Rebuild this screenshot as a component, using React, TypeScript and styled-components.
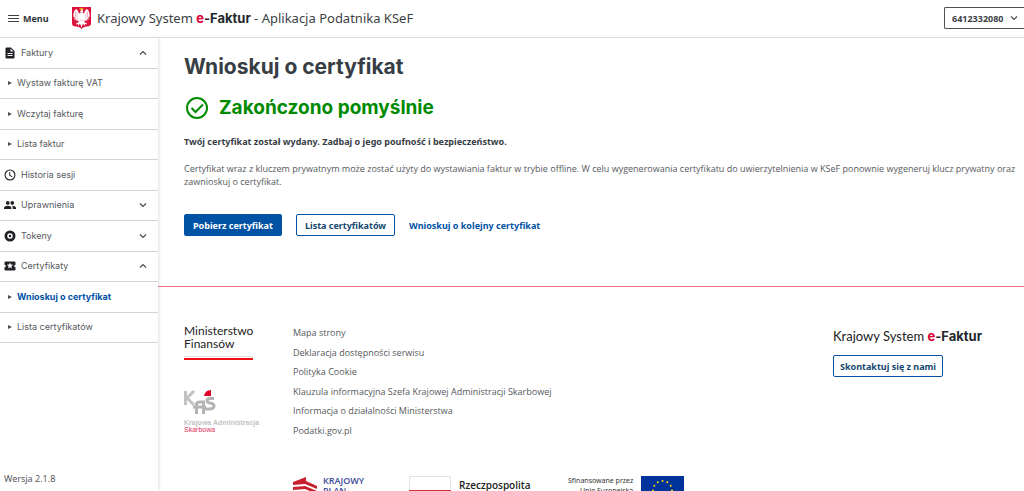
import React from "react";
import styled, { createGlobalStyle, css } from "styled-components";

const sans = `"Open Sans", "Noto Sans", sans-serif`;
const strong = `"Noto Sans", "Open Sans", sans-serif`;
const display = `Inter, "Noto Sans", sans-serif`;

const GlobalStyle = createGlobalStyle`
  *, *::before, *::after { box-sizing: border-box; }
  body { margin: 0; background: #fff; color: #56595d; font: 9px/13px ${sans}; }
  h1, h2, p, ul { margin: 0; padding: 0; }
  ul { list-style: none; }
  a { color: inherit; text-decoration: none; }
  button, select { font-family: ${strong}; cursor: pointer; }
  svg { display: block; flex: none; }
`;

const Shell = styled.div`
  display: flex;
  flex-direction: column;
  height: 100vh;
  overflow: hidden;
`;

const Header = styled.header`
  display: flex;
  align-items: center;
  flex: none;
  height: 38px;
  padding: 0 0 1px 8px;
  border-bottom: 1px solid #dcdcdc;
`;

const MenuButton = styled.button`
  display: flex;
  align-items: center;
  gap: 4px;
  width: 64px;
  padding: 0;
  border: 0;
  background: none;
  color: #2f353a;
  font-size: 9px;
  font-weight: 700;
`;

const Brand = styled.a`
  display: flex;
  align-items: center;
  gap: 6px;
  color: #3c4146;
  font: 400 13px/18px ${strong};
  white-space: nowrap;
`;

const BrandName = styled.strong`
  font-family: ${display};
  font-weight: 700;
  color: #24282c;
  em { font-style: normal; color: #dc0032; }
`;

const Account = styled.div`
  position: relative;
  margin-left: auto;
  svg { position: absolute; right: 5px; top: 6px; pointer-events: none; }
`;

const AccountSelect = styled.select`
  appearance: none;
  display: block;
  width: 80px;
  height: 22px;
  padding: 0 0 0 7px;
  border: 1px solid #4d5258;
  border-width: 1px 0 1px 1px;
  border-radius: 2px 0 0 2px;
  background: #fff;
  color: #3c4146;
  font-size: 9px;
  font-weight: 700;
`;

const Body = styled.div`
  display: flex;
  flex: 1;
  min-height: 0;
`;

const Sidebar = styled.aside`
  display: flex;
  flex-direction: column;
  justify-content: space-between;
  flex: none;
  width: 158px;
  box-shadow: 1px 0 3px #dedede;
`;

const NavList = styled.ul`
  display: grid;
  grid-auto-rows: 1fr;
  height: 305px;
`;

const NavItem = styled.li`
  display: flex;
  border-bottom: 1px solid #d4d4d4;
`;

const navStyles = css`
  display: flex;
  align-items: center;
  flex: 1;
  border: 0;
  background: none;
  color: #56595d;
  font-family: ${display};
  font-size: 9px;
  line-height: 12px;
`;

const NavGroup = styled.button`
  ${navStyles}
  gap: 5px;
  padding: 0 10px 0 4px;
  svg:nth-of-type(2) { margin-left: auto; }
`;

const NavLink = styled.a<{ $active?: boolean }>`
  ${navStyles}
  gap: 5px;
  padding-left: 8px;
  ${(p) => p.$active && css`color: #0052a5; font-weight: 700;`}
`;

const Version = styled.p`
  padding: 0 4px 6px;
  font-family: ${strong};
`;

const Content = styled.div`
  flex: 1;
  min-width: 0;
  overflow-y: auto;
  scrollbar-width: none;
`;

const Main = styled.main`
  padding: 15px 4px 50px 26px;
  border-bottom: 1px solid #f0708c;
`;

const Title = styled.h1`
  color: #363d44;
  font: 700 21px/27px ${display};
`;

const Success = styled.h2`
  display: flex;
  align-items: center;
  gap: 9px;
  margin-top: 15px;
  color: #008a00;
  font: 700 19px/26px ${display};
`;

const Lead = styled.p`
  margin-top: 14px;
  color: #363d44;
  font: 700 9px/13px ${strong};
`;

const Note = styled.p`
  margin-top: 14px;
`;

const Actions = styled.div`
  display: flex;
  align-items: center;
  gap: 14px;
  margin-top: 26px;
`;

const Button = styled.button<{ $primary?: boolean; $compact?: boolean }>`
  height: 22px;
  padding: 0 ${(p) => (p.$compact ? 6 : 8)}px;
  border: 1px solid #0052a5;
  border-radius: 2px;
  background: ${(p) => (p.$primary ? "#0052a5" : "#fff")};
  color: ${(p) => (p.$primary ? "#fff" : "#12476f")};
  font-size: 9px;
  font-weight: 700;
  white-space: nowrap;
`;

const TextLink = styled.a`
  color: #0052a5;
  font-family: ${strong};
  font-weight: 700;
`;

const Footer = styled.footer`
  padding: 37px 26px 20px;
`;

const FooterTop = styled.div`
  display: flex;
`;

const Logos = styled.div`
  flex: none;
  width: 109px;
`;

const Ministry = styled.div`
  width: 69px;
  padding-bottom: 6px;
  color: #222;
  font: 400 12px/13px Lato, sans-serif;
`;

const FlagRule = styled.div`
  width: 69px;
  height: 4px;
  border-top: 1px solid #dcdcdc;
  border-bottom: 2px solid #f01018;
`;

const Kas = styled.div`
  margin-top: 30px;
  color: #c4c4c4;
  font: 700 7px/7px "Liberation Sans", sans-serif;
  white-space: nowrap;
  svg { margin-bottom: 5px; }
  span { display: block; color: #e2325a; font-weight: 400; }
`;

const FooterLinks = styled.ul`
  display: flex;
  flex-direction: column;
  justify-content: space-between;
  height: 111px;
  margin-top: 2px;
`;

const Contact = styled.div`
  width: 165px;
  margin-left: auto;
  padding-top: 3px;
`;

const FooterBrand = styled.p`
  margin-bottom: 10px;
  color: #222;
  font: 400 13px/18px Lato, sans-serif;
  white-space: nowrap;
`;

const Funding = styled.div`
  display: flex;
  margin-top: 39px;
  padding-left: 109px;
`;

const Partner = styled.div<{ $width: number; $gap: number }>`
  display: flex;
  gap: ${(p) => p.$gap}px;
  width: ${(p) => p.$width}px;
  white-space: nowrap;
`;

const PlanText = styled.p`
  color: #3d4a9a;
  font: 600 9px/10px ${sans};
`;

const PolandText = styled.p`
  padding-top: 3px;
  color: #222;
  font: 600 10px/12px ${sans};
`;

const UnionText = styled.p`
  color: #333;
  font: 400 7px/10px ${strong};
  text-align: right;
`;

const Chevron = ({ up }: { up?: boolean }) => (
  <svg width="10" height="10" viewBox="0 0 10 10" fill="none" stroke="#4a4f54" strokeWidth="1.3" aria-hidden="true">
    <path d={up ? "M2 6.5 5 3.6 8 6.5" : "M2 3.5 5 6.4 8 3.5"} />
  </svg>
);

const MaterialIcon = ({ d }: { d: string }) => (
  <svg width="12" height="12" viewBox="0 0 24 24" fill="#202124" aria-hidden="true">
    <path fillRule="evenodd" d={d} />
  </svg>
);

const icons = {
  document: "M14 1H5a2 2 0 0 0-2 2v18a2 2 0 0 0 2 2h14a2 2 0 0 0 2-2V8zM7 18h10v-2H7zM7 14h10v-2H7zM13 9V3l6 6z",
  clock: "M12 1a11 11 0 1 0 0 22 11 11 0 0 0 0-22zm0 19.8a8.8 8.8 0 1 1 0-17.6 8.8 8.8 0 0 1 0 17.6zM12.5 6h-2v7l5.6 3.5 1-1.6-4.6-2.8z",
  group: "M16.5 11.5a3.7 3.7 0 1 0 0-7.4 3.7 3.7 0 0 0 0 7.4zM7.5 11.5a3.7 3.7 0 1 0 0-7.4 3.7 3.7 0 0 0 0 7.4zM7.5 13.5C4.5 13.5 0 15 0 17.8V20h15v-2.2c0-2.8-4.5-4.3-7.5-4.3zM16.5 13.5l-1 .1c1.3.9 2.2 2.3 2.2 4.2V20H24v-2.2c0-2.8-4.5-4.3-7.5-4.3z",
  token: "M12 1a11 11 0 1 0 0 22 11 11 0 0 0 0-22zm0 5.5a5.5 5.5 0 1 1 0 11 5.5 5.5 0 0 1 0-11zM12 9.5a2.5 2.5 0 1 0 0 5 2.5 2.5 0 0 0 0-5z",
  ticket: "M23 9.5V5a2 2 0 0 0-2-2H3a2 2 0 0 0-2 2v4.5a2.5 2.5 0 0 1 0 5V19c0 1.1.9 2 2 2h18a2 2 0 0 0 2-2v-4.5a2.5 2.5 0 0 1 0-5zM15.9 17 12 14.4 8.1 17l1.2-4.6L5.6 9.5l4.7-.3L12 4.8l1.7 4.4 4.7.3-3.7 2.900z",
};

const Eagle = () => (
  <svg width="19" height="22" viewBox="0 0 38 44" role="img" aria-label="Godło Polski">
    <path fill="#dc143c" d="M0 0h38v33c0 4-3 6-8 6-5 0-8 2-11 5-3-3-6-5-11-5-5 0-8-2-8-6z" />
    <path fill="#fff" d="M18 7c3-3 5 0 4 2-1 2-1 3 0 4 3 0 4-6 7-9 5 2 7 8 6 17l-2-2v7l-2-3-1 6-2-4-2 4-3-2c1 3 3 5 6 5l1 3-4-1-1 4-2-4-2 1-2 7-2-7-2-1-2 4-1-4-4 1 1-3c3 0 5-2 6-5l-3 2-2-4-2 4-1-6-2 3v-7l-2 2C2 12 4 6 9 4c3 3 4 9 7 9 2-1 2-2 0-4z" />
    <path stroke="#dc143c" strokeWidth=".6" fill="none" d="M7 9v12M10 11v14M31 9v12M28 11v14M16 26l3 1 3-1" />
    <path fill="#e8b923" d="m16 6-1-4 2 1 2-2 2 2 2-1-1 4z" />
  </svg>
);

const EuFlag = () => (
  <svg width="43" height="29" viewBox="0 0 43 29" role="img" aria-label="Flaga Unii Europejskiej">
    <path fill="#003399" d="M0 0h43v29H0z" />
    {Array.from({ length: 12 }, (_, i) => {
      const a = (i * Math.PI) / 6;
      return <circle key={i} cx={21.5 + 9.5 * Math.sin(a)} cy={14.5 - 9.5 * Math.cos(a)} r="1" fill="#ffdd00" />;
    })}
  </svg>
);

type Entry = { label: string; icon?: string; open?: boolean; plain?: boolean; active?: boolean };

const entries: Entry[] = [
  { label: "Faktury", icon: icons.document, open: true },
  { label: "Wystaw fakturę VAT" },
  { label: "Wczytaj fakturę" },
  { label: "Lista faktur" },
  { label: "Historia sesji", icon: icons.clock, plain: true },
  { label: "Uprawnienia", icon: icons.group },
  { label: "Tokeny", icon: icons.token },
  { label: "Certyfikaty", icon: icons.ticket, open: true },
  { label: "Wnioskuj o certyfikat", active: true },
  { label: "Lista certyfikatów" },
];

const footerLinks = [
  "Mapa strony",
  "Deklaracja dostępności serwisu",
  "Polityka Cookie",
  "Klauzula informacyjna Szefa Krajowej Administracji Skarbowej",
  "Informacja o działalności Ministerstwa",
  "Podatki.gov.pl",
];

export default function App() {
  return (
    <Shell>
      <GlobalStyle />
      <Header>
        <MenuButton>
          <svg width="11" height="9" viewBox="0 0 11 9" stroke="#3c4146" strokeWidth="1.2" aria-hidden="true">
            <path d="M0 1.5h11M0 4.5h11M0 7.5h11" />
          </svg>
          Menu
        </MenuButton>
        <Brand href="#">
          <Eagle />
          <span>
            Krajowy System <BrandName><em>e</em>-Faktur</BrandName> - Aplikacja Podatnika KSeF
          </span>
        </Brand>
        <Account>
          <AccountSelect aria-label="Kontekst" defaultValue="6412332080">
            <option>6412332080</option>
          </AccountSelect>
          <Chevron />
        </Account>
      </Header>
      <Body>
        <Sidebar>
          <nav>
            <NavList>
              {entries.map((e) => (
                <NavItem key={e.label}>
                  {e.icon ? (
                    <NavGroup aria-expanded={e.plain ? undefined : !!e.open}>
                      <MaterialIcon d={e.icon} />
                      {e.label}
                      {!e.plain && <Chevron up={e.open} />}
                    </NavGroup>
                  ) : (
                    <NavLink href="#" $active={e.active}>
                      <svg width="4" height="4" viewBox="0 0 4 4" fill="#4a4f54" aria-hidden="true">
                        <path d="M0 0l4 2-4 2z" />
                      </svg>
                      {e.label}
                    </NavLink>
                  )}
                </NavItem>
              ))}
            </NavList>
          </nav>
          <Version>Wersja 2.1.8</Version>
        </Sidebar>
        <Content>
          <Main>
            <Title>Wnioskuj o certyfikat</Title>
            <Success>
              <svg width="26" height="26" viewBox="0 0 26 26" fill="none" stroke="#008a00" strokeWidth="2" aria-hidden="true">
                <circle cx="13" cy="13" r="10" />
                <path d="m7.5 13 4 4 7.5-7.5" />
              </svg>
              Zakończono pomyślnie
            </Success>
            <Lead>Twój certyfikat został wydany. Zadbaj o jego poufność i bezpieczeństwo.</Lead>
            <Note>
              Certyfikat wraz z kluczem prywatnym może zostać użyty do wystawiania faktur w trybie offline. W celu
              wygenerowania certyfikatu do uwierzytelnienia w KSeF ponownie wygeneruj klucz prywatny oraz zawnioskuj o
              certyfikat.
            </Note>
            <Actions>
              <Button $primary>Pobierz certyfikat</Button>
              <Button>Lista certyfikatów</Button>
              <TextLink href="#">Wnioskuj o kolejny certyfikat</TextLink>
            </Actions>
          </Main>
          <Footer>
            <FooterTop>
              <Logos>
                <Ministry>Ministerstwo Finansów</Ministry>
                <FlagRule />
                <Kas>
                  <svg width="33" height="24" viewBox="0 0 33 24" fill="none" strokeWidth="3" aria-hidden="true">
                    <path stroke="#c2c2c2" d="M1.5 1v14M10 1 3 8l7 7" />
                    <path stroke="#b4b4b4" d="M12.5 24v-9q0-3 3-3h4v12M9 17h13M30 8.500h-4q-3 0-3 2t3 2.500q4 .5 4 3t-4 3h-6" />
                    <path fill="#e4002b" d="M20 6q1-6 7-6v6z" />
                  </svg>
                  Krajowa Administracja
                  <span>Skarbowa</span>
                </Kas>
              </Logos>
              <FooterLinks>
                {footerLinks.map((label) => (
                  <li key={label}><a href="#">{label}</a></li>
                ))}
              </FooterLinks>
              <Contact>
                <FooterBrand>Krajowy System <BrandName><em>e</em>-Faktur</BrandName></FooterBrand>
                <Button $compact>Skontaktuj się z nami</Button>
              </Contact>
            </FooterTop>
            <Funding>
              <Partner $width={116} $gap={6}>
                <svg width="24" height="28" viewBox="0 0 24 28" fill="#c8202f" aria-hidden="true">
                  <path d="M0 6 13 1v4l11 5v3L12 8 0 9zM0 11l12-1 12 5v3l-12-5-12 1zM0 16l12-1 12 5v3l-12-5-12 1z" />
                </svg>
                <PlanText>KRAJOWY<br />PLAN<br />ODBUDOWY</PlanText>
              </Partner>
              <Partner $width={159} $gap={8}>
                <svg width="42" height="28" viewBox="0 0 42 28" role="img" aria-label="Flaga Polski">
                  <path fill="#fff" stroke="#e2e2e2" d="M.5.5h41v27H.5z" />
                  <path fill="#d22f3f" d="M0 14h42v14H0z" />
                </svg>
                <PolandText>Rzeczpospolita<br />Polska</PolandText>
              </Partner>
              <Partner $width={116} $gap={8}>
                <UnionText>Sfinansowane przez<br />Unię Europejską</UnionText>
                <EuFlag />
              </Partner>
            </Funding>
          </Footer>
        </Content>
      </Body>
    </Shell>
  );
}
